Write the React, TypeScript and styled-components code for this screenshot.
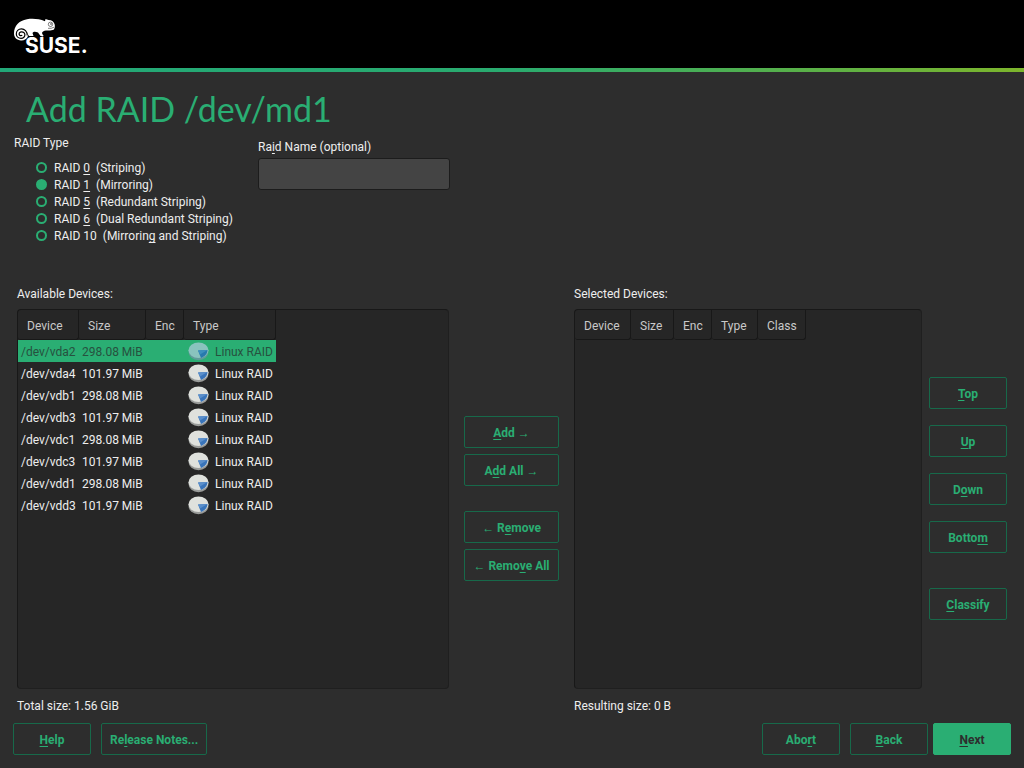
import React from 'react';
import styled, { createGlobalStyle } from 'styled-components';

const green = '#2aae73';

const GlobalStyle = createGlobalStyle`
  * { box-sizing: border-box; }
  body {
    margin: 0;
    background: #2d2d2d;
    color: #eeeeee;
    font: 12px/16px Roboto, sans-serif;
  }
`;

const Page = styled.div`
  display: flex;
  flex-direction: column;
  min-height: 100vh;
`;

const Header = styled.header`
  display: flex;
  height: 68px;
  padding: 12px 8px;
  background: #000;
`;

const Stripe = styled.div`
  height: 4px;
  background: linear-gradient(to right, #22a878 0%, #2aab6f 50%, #7db52c 100%);
`;

const Title = styled.h1`
  margin: 13px 26px 0;
  color: ${green};
  font: 400 34px/48px Lato, sans-serif;
`;

const Setup = styled.section`
  display: flex;
  flex-wrap: wrap;
  padding: 1px 14px 41px;
`;

const TypeGroup = styled.fieldset`
  width: 244px;
  margin: 0;
  padding: 0;
  border: 0;
`;

const Legend = styled.legend`
  padding: 1px 0 8px;
  line-height: 17px;
`;

const Option = styled.label`
  display: flex;
  align-items: flex-start;
  gap: 7px;
  padding-left: 22px;
  line-height: 17px;
  white-space: pre;
`;

const Radio = styled.input`
  appearance: none;
  width: 11px;
  height: 11px;
  margin: 2px 0 0;
  border: 2px solid ${green};
  border-radius: 50%;
  &:checked { background: ${green}; }
`;

const NameField = styled.div`
  display: flex;
  flex-direction: column;
  gap: 3px;
  padding-top: 5px;
`;

const NameInput = styled.input`
  width: 192px;
  height: 32px;
  padding: 0 8px;
  border: 1px solid #1c1c1c;
  border-radius: 3px;
  outline: 0;
  background: #444444;
  color: inherit;
  font: inherit;
`;

const Hot = styled.u`
  text-decoration-thickness: 1px;
  text-underline-offset: 2px;
  text-decoration-skip-ink: none;
`;

const Devices = styled.main`
  display: grid;
  flex: 1;
  grid-template-columns: 432fr 125px 348fr 85px;
  grid-template-rows: 16px 1fr auto;
  row-gap: 7px;
  padding: 0 17px 9px;
`;

const Caption = styled.div<{ $column: number }>`
  grid-column: ${p => p.$column};
`;

const Total = styled(Caption)`
  grid-row: 3;
  padding-top: 2px;
`;

const ListBox = styled.div<{ $column: number }>`
  grid-row: 2;
  grid-column: ${p => p.$column};
  border: 1px solid #1f1f1f;
  border-top-color: #181818;
  border-left-color: #181818;
  border-radius: 4px;
  background: #262626;
`;

const Table = styled.table<{ $width: number }>`
  width: ${p => p.$width}px;
  border-collapse: separate;
  border-spacing: 0;
  table-layout: fixed;
`;

const Th = styled.th<{ $width: number }>`
  width: ${p => p.$width}px;
  height: 30px;
  padding: 2px 0 0 9px;
  border: solid #181818;
  border-width: 0 1px 1px 0;
  border-radius: 0 0 3px 3px;
  color: #c9c9c9;
  font-weight: 400;
  text-align: left;
`;

const Row = styled.tr<{ $selected: boolean }>`
  background: ${p => (p.$selected ? green : 'transparent')};
  color: ${p => (p.$selected ? '#27513f' : '#eeeeee')};
`;

const Td = styled.td`
  height: 22px;
  padding: 2px 0 0 3px;
  white-space: nowrap;
`;

const TypeTd = styled(Td)`
  padding-left: 4px;
`;

const TypeCell = styled.div`
  display: flex;
  align-items: center;
  gap: 6px;
`;

const Stack = styled.div<{ $column: number; $gap: number }>`
  display: flex;
  grid-row: 2;
  grid-column: ${p => p.$column};
  flex-direction: column;
  justify-content: center;
  gap: ${p => p.$gap}px;
  padding: 0 0 2px 7px;
`;

const MoveStack = styled(Stack)`
  padding: 0 15px 2px;
`;

const Button = styled.button<{ $primary?: boolean; $spaced?: boolean }>`
  min-width: 78px;
  height: 32px;
  margin: ${p => (p.$spaced ? 19 : 0)}px 0 0;
  padding: 2px 8px 0;
  border: 1px solid ${p => (p.$primary ? green : '#17694a')};
  border-radius: 2px;
  background: ${p => (p.$primary ? green : 'transparent')};
  color: ${p => (p.$primary ? '#2d2d2d' : green)};
  font: 700 12px/16px Roboto, sans-serif;
  white-space: nowrap;
`;

const Footer = styled.footer`
  display: flex;
  justify-content: space-between;
  padding: 0 13px 13px;
`;

const FooterGroup = styled.div<{ $gap: number }>`
  display: flex;
  gap: ${p => p.$gap}px;
`;

const Logo = () => (
  <svg width="80" height="44" viewBox="8 12 80 44" role="img" aria-label="SUSE">
    <path
      fill="#fff"
      d="M14 33.500C14 26 19 20.500 27 19.300C33 18.300 39 19 45 21.200L45.500 19L48.500 20C52 20 54 21.800 54.700 24.500C55 26.500 54.800 28 54 29.500C51 31.200 47 30 44.500 30.800C41.500 31.800 41.500 33.500 43.500 35.500L43 36.500L40.500 36L38 32.500C36 31.600 33.500 31 32.500 33L33.500 36H29L28.500 34.500L28 36C27 39 24 40.700 21 40.500C17 40.200 14 37.500 14 33.500Z"
    />
    <path
      d="M27.300 35.500C27.300 31.300 24.500 28.800 21.500 28.800C18.300 28.800 16.300 31.200 16.300 34C16.300 36.700 18.600 38.300 21 38.300C23.500 38.300 25 36.600 24.900 34.700C24.800 32.700 23.200 31.700 21.500 31.800C19.900 31.900 18.900 33.200 19.200 34.500C19.500 35.800 21.300 36.200 22.200 35"
      fill="none"
      stroke="#000"
      strokeWidth="1.200"
    />
    <circle cx="50.500" cy="24.300" r="2.200" fill="#fff" stroke="#000" strokeWidth=".5" />
    <circle cx="51" cy="24" r=".7" />
    <path d="M48 28.300Q51.500 28.800 54 27.200" fill="none" stroke="#000" strokeWidth=".5" />
    <text x="25" y="52.500" fill="#fff" fontFamily="Inter, sans-serif" fontWeight="700" fontSize="21">SUSE.</text>
  </svg>
);

const DiskIcon = ({ selected }: { selected: boolean }) => (
  <svg width="21" height="20" viewBox="0 0 21 20" aria-hidden="true">
    <ellipse cx="10.500" cy="9.700" rx="10" ry="8.500" fill={selected ? '#609b99' : '#999b99'} />
    <ellipse cx="10.500" cy="8.300" rx="10" ry="7.800" fill={selected ? '#8ac3be' : '#dfe1dd'} />
    <path d="M10 8.500L19.500 8C19.500 11.500 17 14.500 13 16Z" fill={selected ? '#2879ad' : '#3974ba'} />
    <path d="M10 8.500L19.500 8L12 12.500Z" fill={selected ? '#3c8fbd' : '#5b8fcb'} />
  </svg>
);

/* Splits a label so that its accelerator letter is underlined. */
const Label = ({ text }: { text: string }) => {
  const at = text.indexOf('&');
  if (at < 0) return <>{text}</>;
  return (
    <span>
      {text.slice(0, at)}
      <Hot>{text[at + 1]}</Hot>
      {text.slice(at + 2)}
    </span>
  );
};

const raidTypes = [
  'RAID &0  (Striping)',
  'RAID &1  (Mirroring)',
  'RAID &5  (Redundant Striping)',
  'RAID &6  (Dual Redundant Striping)',
  'RAID 10  (Mirrorin&g and Striping)',
];

const devices = [
  ['/dev/vda2', '298.08 MiB'],
  ['/dev/vda4', '101.97 MiB'],
  ['/dev/vdb1', '298.08 MiB'],
  ['/dev/vdb3', '101.97 MiB'],
  ['/dev/vdc1', '298.08 MiB'],
  ['/dev/vdc3', '101.97 MiB'],
  ['/dev/vdd1', '298.08 MiB'],
  ['/dev/vdd3', '101.97 MiB'],
];

const availableColumns: [string, number][] = [['Device', 61], ['Size', 67], ['Enc', 38], ['Type', 92]];
const selectedColumns: [string, number][] = [['Device', 56], ['Size', 43], ['Enc', 38], ['Type', 46], ['Class', 48]];

const HeadRow = ({ columns }: { columns: [string, number][] }) => (
  <thead>
    <tr>
      {columns.map(([name, width]) => (
        <Th key={name} scope="col" $width={width}>{name}</Th>
      ))}
    </tr>
  </thead>
);

export default function App() {
  return (
    <Page>
      <GlobalStyle />
      <Header><Logo /></Header>
      <Stripe />
      <Title>Add RAID /dev/md1</Title>
      <Setup>
        <TypeGroup>
          <Legend>RAID Type</Legend>
          {raidTypes.map((type, i) => (
            <Option key={type}>
              <Radio type="radio" name="raid-type" defaultChecked={i === 1} />
              <Label text={type} />
            </Option>
          ))}
        </TypeGroup>
        <NameField>
          <label htmlFor="raid-name"><Label text="Ra&id Name (optional)" /></label>
          <NameInput id="raid-name" type="text" />
        </NameField>
      </Setup>
      <Devices>
        <Caption $column={1} id="available">Available Devices:</Caption>
        <Caption $column={3} id="selected">Selected Devices:</Caption>
        <ListBox $column={1}>
          <Table $width={258} aria-labelledby="available">
            <HeadRow columns={availableColumns} />
            <tbody>
              {devices.map(([name, size], i) => (
                <Row key={name} $selected={i === 0}>
                  <Td>{name}</Td>
                  <Td>{size}</Td>
                  <Td />
                  <TypeTd><TypeCell><DiskIcon selected={i === 0} />Linux RAID</TypeCell></TypeTd>
                </Row>
              ))}
            </tbody>
          </Table>
        </ListBox>
        <MoveStack $column={2} $gap={6}>
          <Button type="button"><Label text="&Add →" /></Button>
          <Button type="button"><Label text="A&dd All →" /></Button>
          <Button type="button" $spaced><Label text="← R&emove" /></Button>
          <Button type="button"><Label text="← Remo&ve All" /></Button>
        </MoveStack>
        <ListBox $column={3}>
          <Table $width={231} aria-labelledby="selected">
            <HeadRow columns={selectedColumns} />
          </Table>
        </ListBox>
        <Stack $column={4} $gap={16}>
          <Button type="button"><Label text="&Top" /></Button>
          <Button type="button"><Label text="&Up" /></Button>
          <Button type="button"><Label text="D&own" /></Button>
          <Button type="button"><Label text="Botto&m" /></Button>
          <Button type="button" $spaced><Label text="&Classify" /></Button>
        </Stack>
        <Total $column={1}>Total size: 1.56 GiB</Total>
        <Total $column={3}>Resulting size: 0 B</Total>
      </Devices>
      <Footer>
        <FooterGroup $gap={10}>
          <Button type="button"><Label text="&Help" /></Button>
          <Button type="button"><Label text="Re&lease Notes..." /></Button>
        </FooterGroup>
        <FooterGroup $gap={10}>
          <Button type="button"><Label text="Abo&rt" /></Button>
          <FooterGroup $gap={5}>
            <Button type="button"><Label text="&Back" /></Button>
            <Button type="button" $primary><Label text="&Next" /></Button>
          </FooterGroup>
        </FooterGroup>
      </Footer>
    </Page>
  );
}
